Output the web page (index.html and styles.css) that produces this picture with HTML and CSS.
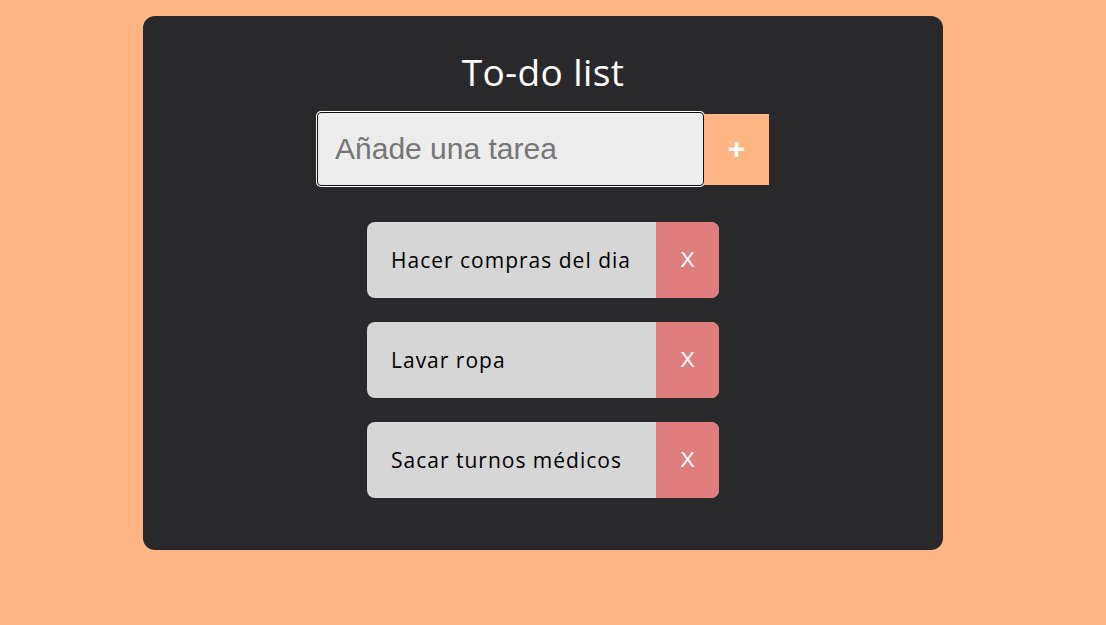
FILE: index.html
```html
<!DOCTYPE html>
<html lang="es">
<head>
<meta charset="utf-8">
<title>To-do list</title>
<link rel="stylesheet" href="styles.css">
</head>
<body>
<div class="page">
  <main class="card">
    <h1 class="title">To-do list</h1>
    <form class="add-form">
      <input class="add-input" type="text" placeholder="Añade una tarea">
      <button class="add-btn" type="button">+</button>
    </form>
    <ul class="tasks">
      <li class="task"><span class="task-text">Hacer compras del dia</span><button class="task-del" type="button">X</button></li>
      <li class="task"><span class="task-text">Lavar ropa</span><button class="task-del" type="button">X</button></li>
      <li class="task"><span class="task-text">Sacar turnos médicos</span><button class="task-del" type="button">X</button></li>
    </ul>
  </main>
</div>
</body>
</html>
```

FILE: styles.css
```css
* { box-sizing: border-box; }
html, body { margin: 0; padding: 0; }
body {
  background: #fdb683;
  font-family: "Open Sans", "Liberation Sans", sans-serif;
  height: 625px;
  overflow: hidden;
}
.page {
  display: flex;
  justify-content: center;
  padding: 16px 20px 0 0;
}
.card {
  width: 800px;
  height: 534px;
  background: #29292b;
  border-radius: 12px;
  display: flex;
  flex-direction: column;
  align-items: center;
  padding-top: 34px;
}
.title {
  margin: 0;
  color: #ffffff;
  font-weight: 500;
  font-size: 37px;
  letter-spacing: 0.4px;
  line-height: 44px;
}
.add-form {
  display: flex;
  align-items: center;
  margin-top: 18px;
}
.add-input {
  width: 387px;
  height: 74px;
  background: #ececec;
  border: 1px solid #101010;
  outline: none;
  border-radius: 4px;
  box-shadow: 0 0 0 1px #ffffff;
  padding: 0 0 0 17px;
  font-family: "Liberation Sans", Arial, sans-serif;
  font-size: 30px;
  color: #222;
}
.add-input::placeholder { color: #767676; }
.add-btn {
  width: 65px;
  height: 71px;
  background: #fdb683;
  border: none;
  color: #ffffff;
  font-family: "Liberation Sans", Arial, sans-serif;
  font-weight: 700;
  font-size: 30px;
  padding: 0;
  line-height: 1;
}
.tasks {
  list-style: none;
  margin: 36px 0 0;
  padding: 0;
  display: flex;
  flex-direction: column;
  gap: 24px;
}
.task {
  width: 352px;
  height: 76px;
  display: flex;
  background: #d6d6d6;
  border-radius: 8px;
  overflow: hidden;
}
.task-text {
  flex: 1;
  display: flex;
  align-items: center;
  padding-left: 24px;
  font-size: 21px;
  font-weight: 500;
  letter-spacing: 1px;
  color: #000;
}
.task-del {
  width: 63px;
  background: #e07e7e;
  border: none;
  color: #ffffff;
  font-family: "Liberation Sans", Arial, sans-serif;
  font-size: 22px;
  padding: 0;
}
```
